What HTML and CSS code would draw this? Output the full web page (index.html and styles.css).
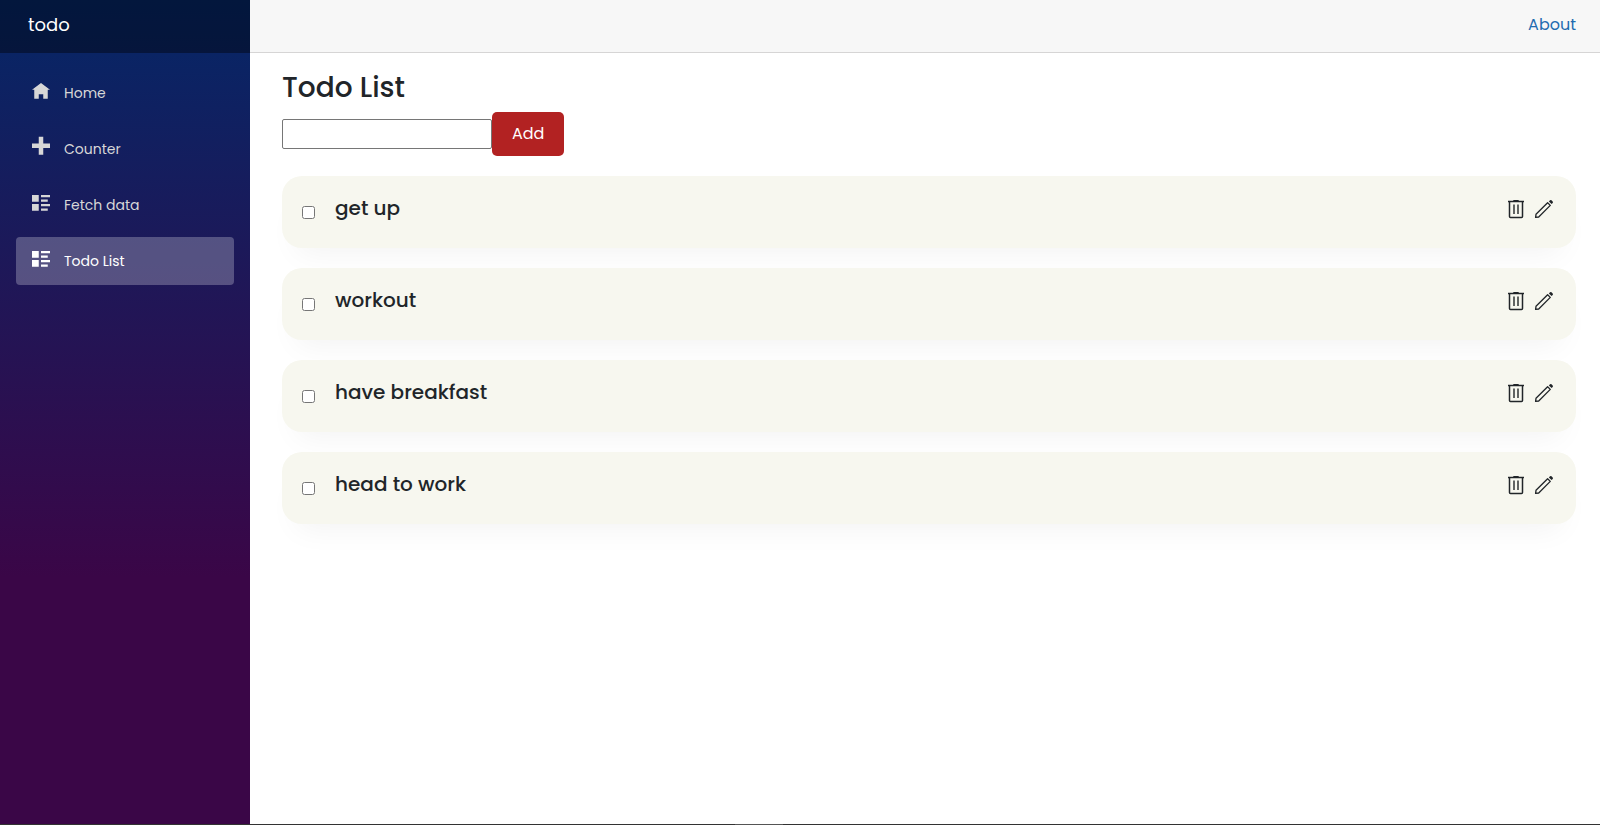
FILE: index.html
```html
<!DOCTYPE html>
<html lang="en">
<head>
<meta charset="utf-8">
<title>todo</title>
<link rel="stylesheet" href="styles.css">
</head>
<body>
<svg class="sprite" aria-hidden="true">
  <symbol id="home" viewBox="0 0 8 8"><path d="M4 0l-4 3h1v4h2v-2h2v2h2v-4h1l-4-3z"/></symbol>
  <symbol id="plus" viewBox="0 0 8 8"><path d="M3 -1v3h-3v2h3v3h2v-3h3v-2h-3v-3h-2z"/></symbol>
  <symbol id="list" viewBox="0 0 8 8"><path d="M0 0v3h3v-3h-3zm4 0v1h4v-1h-4zm0 2v1h3v-1h-3zm-4 2v3h3v-3h-3zm4 0v1h4v-1h-4zm0 2v1h3v-1h-3z"/></symbol>
  <symbol id="trash" viewBox="0 0 20 20"><path d="M2 2.500h16" fill="none" stroke="currentColor" stroke-width="1.500"/><path d="M7 2.200l.5-1.200h5l.5 1.200z"/><path d="M3.500 2.700v14.800q0 1 1 1h11q1 0 1-1v-14.800" fill="none" stroke="currentColor" stroke-width="1.500"/><path d="M8 5.500v9.500M12 5.500v9.500" fill="none" stroke="currentColor" stroke-width="1.400"/></symbol>
  <symbol id="pencil" viewBox="0 0 20 20"><path d="M1.600 18.400l.4-3.100 11.600-11.600 2.700 2.700-11.600 11.600z" fill="none" stroke="currentColor" stroke-width="1.300" stroke-linejoin="round"/><path d="M14.900 2.400l1.100-1.100q.8-.6 1.500 0l1.200 1.200q.6.700 0 1.500l-1.100 1.100z"/></symbol>
</svg>
<div class="page">
  <aside class="sidebar">
    <div class="brand"><a href="#">todo</a></div>
    <nav class="nav">
      <a class="nav-link" href="#"><svg class="nav-icon"><use href="#home"/></svg>Home</a>
      <a class="nav-link" href="#"><svg class="nav-icon"><use href="#plus"/></svg>Counter</a>
      <a class="nav-link" href="#"><svg class="nav-icon"><use href="#list"/></svg>Fetch data</a>
      <a class="nav-link active" href="#" aria-current="page"><svg class="nav-icon"><use href="#list"/></svg>Todo List</a>
    </nav>
  </aside>
  <main class="main">
    <header class="topbar"><a href="#">About</a></header>
    <section class="content">
      <h1 class="title">Todo List</h1>
      <form class="add-form">
        <input class="add-input" type="text" aria-label="New todo">
        <button class="add-button" type="button">Add</button>
      </form>
      <ul class="todos">
        <li class="todo"><input class="check" type="checkbox" id="t1"><label class="label" for="t1">get up</label><button class="action" type="button" aria-label="Delete"><svg><use href="#trash"/></svg></button><button class="action" type="button" aria-label="Edit"><svg><use href="#pencil"/></svg></button></li>
        <li class="todo"><input class="check" type="checkbox" id="t2"><label class="label" for="t2">workout</label><button class="action" type="button" aria-label="Delete"><svg><use href="#trash"/></svg></button><button class="action" type="button" aria-label="Edit"><svg><use href="#pencil"/></svg></button></li>
        <li class="todo"><input class="check" type="checkbox" id="t3"><label class="label" for="t3">have breakfast</label><button class="action" type="button" aria-label="Delete"><svg><use href="#trash"/></svg></button><button class="action" type="button" aria-label="Edit"><svg><use href="#pencil"/></svg></button></li>
        <li class="todo"><input class="check" type="checkbox" id="t4"><label class="label" for="t4">head to work</label><button class="action" type="button" aria-label="Delete"><svg><use href="#trash"/></svg></button><button class="action" type="button" aria-label="Edit"><svg><use href="#pencil"/></svg></button></li>
      </ul>
    </section>
  </main>
</div>
<footer class="edge"><div class="edge-handle"></div></footer>
</body>
</html>
```

FILE: styles.css
```css
* { box-sizing: border-box; }

body {
  margin: 0;
  min-height: 100vh;
  display: flex;
  flex-direction: column;
  font-family: Poppins, Inter, "Open Sans", sans-serif;
  font-size: 16px;
  line-height: 24px;
  color: #212529;
  background: #fff;
}

a { text-decoration: none; }

.sprite { display: none; }

.page { flex: 1; display: flex; }

.sidebar {
  flex: 0 0 250px;
  background: linear-gradient(180deg, rgb(5, 39, 103) 0%, #3a0647 70%);
}

.brand {
  display: flex;
  align-items: center;
  height: 53px;
  padding: 0 28px 4px;
  background: rgba(0, 0, 0, 0.4);
}

.brand a { color: #fff; font-size: 18px; }

.nav {
  display: flex;
  flex-direction: column;
  gap: 8px;
  padding: 16px;
}

.nav-link {
  display: flex;
  gap: 14px;
  height: 48px;
  padding: 0 16px;
  border-radius: 4px;
  color: #d7d7d7;
  font-size: 14px;
  line-height: 48px;
}

.nav-link.active { color: #fff; background: rgba(255, 255, 255, 0.25); }

.nav-icon {
  width: 18px;
  height: 18px;
  margin-top: 14px;
  overflow: visible;
  fill: currentColor;
}

#plus { overflow: visible; }

.main { flex: 1; min-width: 0; }

.topbar {
  display: flex;
  align-items: center;
  justify-content: flex-end;
  height: 53px;
  padding: 0 24px 2px;
  border-bottom: 1px solid #d6d5d5;
  background: #f7f7f7;
}

.topbar a { color: #1f6cb0; }

.content { padding: 18px 24px 24px 32px; }

.title { margin: 0 0 8px; font-size: 28px; line-height: 33px; font-weight: 500; }

.add-form { display: flex; align-items: center; margin-bottom: 20px; }

.add-input {
  width: 210px;
  height: 30px;
  padding: 1px 2px;
  border: 1px solid #767676;
  border-radius: 2px;
  background: #fff;
  font: inherit;
}

.add-button {
  height: 44px;
  padding: 0 20px;
  border: 0;
  border-radius: 5px;
  background: #b22222;
  color: #fff;
  font: inherit;
}

.todos {
  display: flex;
  flex-direction: column;
  gap: 20px;
  margin: 0;
  padding: 0;
  list-style: none;
}

.todo {
  display: flex;
  align-items: flex-start;
  height: 72px;
  padding: 20px 22px 20px 20px;
  border-radius: 20px;
  background: #f7f7ef;
  box-shadow: 0 20px 30px -15px rgba(0, 0, 0, 0.05);
}

.check { width: 13px; height: 13px; margin: 10px 20px 0 0; }

.label { margin-right: auto; font-size: 20px; font-weight: 500; }

.action {
  display: flex;
  margin: 3px 0 0 8px;
  padding: 0;
  border: 0;
  background: none;
  color: #212529;
}

.action svg { width: 20px; height: 20px; fill: currentColor; }

.edge { display: flex; justify-content: center; height: 1px; background: #333; }

.edge-handle { width: 48px; margin-right: 82px; background: #555; }
```
